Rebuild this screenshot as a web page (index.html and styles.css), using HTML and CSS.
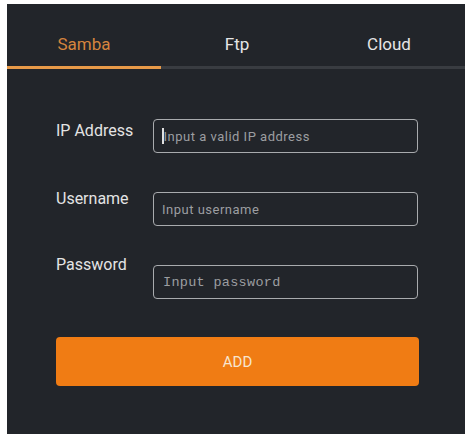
FILE: index.html
```html
<!DOCTYPE html>
<html>
<head>
<meta charset="utf-8">
<link rel="stylesheet" href="styles.css">
</head>
<body>
<div class="panel">
  <div class="tabs">
    <div class="tab active">Samba</div>
    <div class="tab">Ftp</div>
    <div class="tab">Cloud</div>
  </div>
  <div class="form">
    <div class="row row-ip">
      <div class="label">IP Address</div>
      <div class="field"><span class="caret"></span><span class="ph">Input a valid IP address</span></div>
    </div>
    <div class="row row-user">
      <div class="label">Username</div>
      <div class="field"><span class="ph">Input username</span></div>
    </div>
    <div class="row row-pass">
      <div class="label">Password</div>
      <div class="field"><span class="ph mono">Input password</span></div>
    </div>
    <div class="btn">ADD</div>
  </div>
</div>
</body>
</html>
```
FILE: styles.css
```css
html, body {
  margin: 0;
  padding: 0;
  background: #ffffff;
}
body {
  padding: 4px 6px 0 7px;
  font-family: Roboto, "Liberation Sans", sans-serif;
}
.panel {
  width: 458px;
  height: 430px;
  background: #22252a;
  box-sizing: border-box;
}
.tabs {
  display: grid;
  grid-template-columns: 154px 152px 152px;
  height: 62px;
  border-bottom: 3px solid #393c41;
}
.tab {
  display: flex;
  justify-content: center;
  align-items: flex-start;
  padding-top: 30px;
  font-size: 17px;
  color: #e6e6e6;
  box-sizing: border-box;
  height: 65px;
}
.tab.active {
  color: #d5843e;
  border-bottom: 3px solid #e89a48;
}
.form {
  padding: 50px 0 0 49px;
}
.row {
  display: flex;
  align-items: flex-start;
}
.label {
  width: 97px;
  font-size: 16px;
  color: #e4e4e4;
  line-height: 20px;
}
.row-ip .label { margin-top: 2px; }
.row-user { margin-top: 39px; }
.row-user .label { margin-top: -3px; }
.row-pass { margin-top: 39px; }
.row-pass .label { margin-top: -10px; }
.field {
  width: 265px;
  height: 34px;
  box-sizing: border-box;
  border: 1.5px solid #a9abae;
  border-radius: 4px;
  display: flex;
  align-items: center;
  padding-left: 8px;
}
.ph {
  font-size: 13px;
  color: #9c9ea1;
  letter-spacing: 0.5px;
}
.ph.mono {
  font-family: "Liberation Mono", "DejaVu Sans Mono", monospace;
  font-size: 13.5px;
  letter-spacing: 0.3px;
  padding-left: 1px;
}
.caret {
  width: 1.5px;
  height: 16px;
  background: #e0e0e0;
}
.btn {
  margin-top: 38px;
  width: 363px;
  height: 49px;
  background: #f07c14;
  border-radius: 4px;
  display: flex;
  justify-content: center;
  align-items: center;
  color: #f7e5cf;
  font-size: 15px;
}
```
